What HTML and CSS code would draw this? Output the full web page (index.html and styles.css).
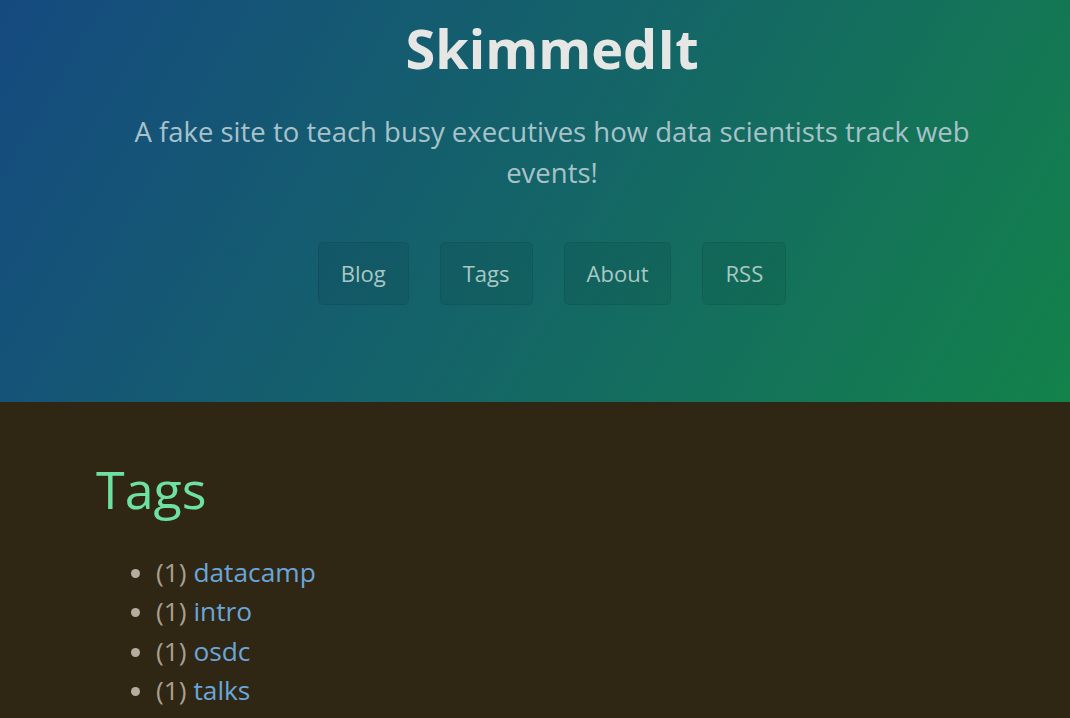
FILE: index.html
```html
<!DOCTYPE html>
<html>
<head>
<meta charset="utf-8">
<link rel="stylesheet" href="styles.css">
</head>
<body>
<header class="page-header">
  <h1 class="project-name">SkimmedIt</h1>
  <h2 class="project-tagline">A fake site to teach busy executives how data scientists track web events!</h2>
  <nav class="nav">
    <a class="btn" href="#">Blog</a>
    <a class="btn" href="#">Tags</a>
    <a class="btn" href="#">About</a>
    <a class="btn" href="#">RSS</a>
  </nav>
</header>
<main class="main-content">
  <h1 class="page-title">Tags</h1>
  <ul class="tag-list">
    <li><span class="count">(1)</span> <a href="#">datacamp</a></li>
    <li><span class="count">(1)</span> <a href="#">intro</a></li>
    <li><span class="count">(1)</span> <a href="#">osdc</a></li>
    <li><span class="count">(1)</span> <a href="#">talks</a></li>
  </ul>
</main>
</body>
</html>
```
FILE: styles.css
```css
* { box-sizing: border-box; }
html, body {
  margin: 0;
  padding: 0;
  background: #302614;
  font-family: "Open Sans", "Liberation Sans", sans-serif;
}
.page-header {
  height: 402px;
  padding: 16px 88px 0 122px;
  text-align: center;
  background: linear-gradient(120deg, #154a80 0%, #146468 50%, #13824a 100%);
}
.project-name {
  margin: 0;
  font-size: 54px;
  font-weight: 700;
  line-height: 65px;
  color: #e6e6e4;
}
.project-tagline {
  margin: 30px 0 0;
  font-size: 27.5px;
  font-weight: 400;
  line-height: 41px;
  color: #a8c2ca;
}
.nav {
  display: flex;
  justify-content: center;
  gap: 31px;
  margin-top: 49px;
}
.btn {
  display: inline-block;
  padding: 15px 22px;
  font-size: 22px;
  line-height: 31px;
  color: #a9c8c4;
  text-decoration: none;
  background: rgba(0, 0, 0, 0.06);
  border: 1px solid rgba(0, 0, 0, 0.08);
  border-radius: 5px;
}
.main-content {
  padding: 56px 96px 0;
}
.page-title {
  margin: 0;
  font-size: 52px;
  font-weight: 400;
  line-height: 62px;
  color: #6ee09f;
}
.tag-list {
  margin: 33px 0 0;
  padding-left: 60px;
  font-size: 26.3px;
  line-height: 39.4px;
  color: #b5ada0;
}
.tag-list li::marker { color: #b5ada0; }
.count { color: #a8a090; }
.tag-list a {
  color: #6aa6da;
  text-decoration: none;
}
```
